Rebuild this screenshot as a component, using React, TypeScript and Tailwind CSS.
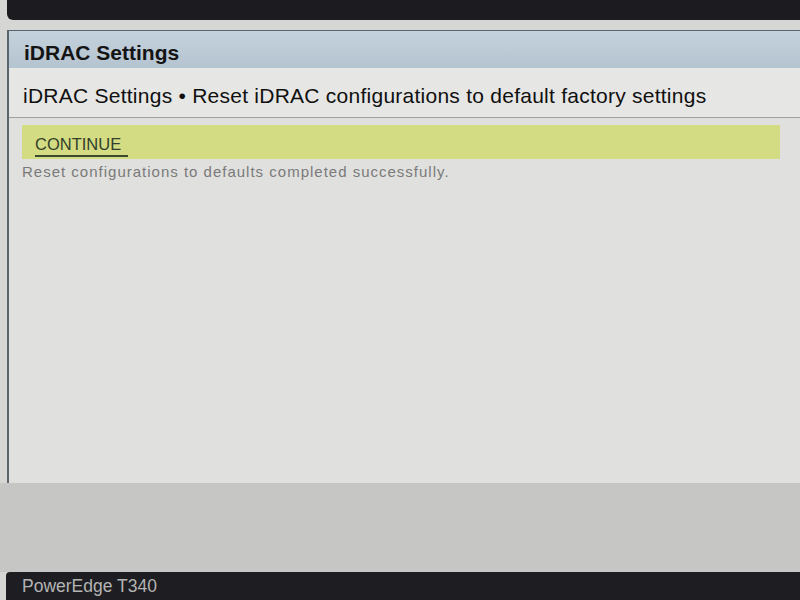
export default function App() {
  return (
    <div className="flex h-[600px] w-[800px] flex-col overflow-hidden bg-[#d6d6d4] font-['Liberation_Sans',Arial,sans-serif]">
      {/* top monitor bezel */}
      <div className="ml-[7px] h-[20px] shrink-0 rounded-bl-[6px] bg-[#1c1c20]" />

      {/* settings panel */}
      <div className="ml-[7px] mt-[10px] flex h-[453px] shrink-0 flex-col border-l-2 border-t border-[#5a646e] bg-[#e0e0de]">
        <div className="flex h-[37px] items-center bg-gradient-to-b from-[#c4d2dc] to-[#b4c4d0] px-[15px] pt-[6px] text-[21px] font-bold text-[#141414]">
          iDRAC Settings
        </div>
        <div className="flex h-[50px] items-center border-b border-[#a0a0a0] bg-[#e6e6e4] px-[14px] pt-[7px] text-[21px] tracking-[0.25px] text-[#101010]">
          iDRAC Settings • Reset iDRAC configurations to default factory settings
        </div>
        <div className="ml-[13px] mr-[20px] mt-[7px] flex h-[34px] items-end bg-[#d3dc82] pl-[13px]">
          <span className="mb-[2px] border-b-2 border-[#3c4a30] pb-[3px] pr-[7px] text-[16.5px] leading-none text-[#34402c]">
            CONTINUE
          </span>
        </div>
        <div className="px-[13px] pt-[2px] text-[15px] tracking-[1px] text-[#7a7a7a]">
          Reset configurations to defaults completed successfully.
        </div>
      </div>

      <div className="flex-1 bg-[#c6c6c4]" />

      {/* bottom status bar */}
      <div className="ml-[6px] flex h-[28px] shrink-0 items-center rounded-tl-[4px] bg-[#1e1e22] px-[16px] pt-[1px] text-[17.5px] text-[#b4b4b4]">
        PowerEdge T340
      </div>
    </div>
  );
}
